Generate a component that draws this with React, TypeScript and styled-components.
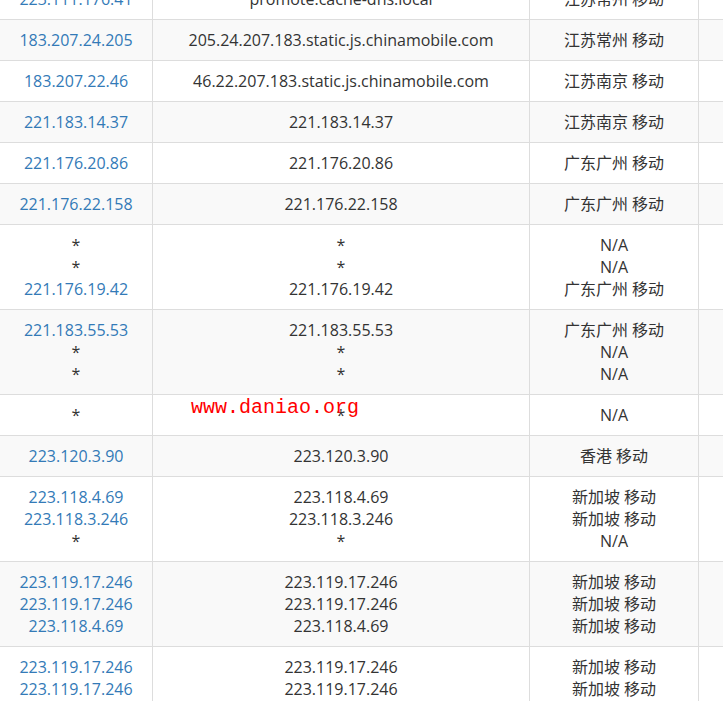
import React from "react";
import styled, { createGlobalStyle } from "styled-components";

const Global = createGlobalStyle`
  html, body { margin: 0; padding: 0; background: #fff; overflow: hidden; }
  body { font-family: "Open Sans", "Noto Sans CJK SC", sans-serif; }
`;

const Page = styled.div`
  position: relative;
  width: 723px;
  height: 701px;
  overflow: hidden;
`;

const Table = styled.table`
  border-collapse: separate;
  border-spacing: 0;
  table-layout: fixed;
  width: 900px;
  margin-top: -21px;
  font-size: 16px;
  line-height: 22px;
  color: #333;
`;

const Row = styled.tr<{ $striped: boolean }>`
  background: ${(p) => (p.$striped ? "#f9f9f9" : "#fff")};
`;

const Cell = styled.td<{ $w: number }>`
  width: ${(p) => p.$w}px;
  box-sizing: border-box;
  padding: 9px 4px;
  text-align: center;
  vertical-align: top;
  border-right: 1px solid #ddd;
  border-bottom: 1px solid #ddd;
  white-space: nowrap;
`;

const IpLine = styled.div<{ $star: boolean }>`
  color: ${(p) => (p.$star ? "#333" : "#337ab7")};
`;

const Line = styled.div``;

const Watermark = styled.div`
  position: absolute;
  left: 191px;
  top: 396px;
  font-family: "Liberation Mono", "DejaVu Sans Mono", monospace;
  font-size: 20px;
  line-height: 24px;
  color: #ff0000;
  pointer-events: none;
`;

type Hop = { ip: string[]; host: string[]; loc: string[] };

const hops: Hop[] = [
  { ip: ["223.111.176.41"], host: ["promote.cache-dns.local"], loc: ["江苏常州 移动"] },
  { ip: ["183.207.24.205"], host: ["205.24.207.183.static.js.chinamobile.com"], loc: ["江苏常州 移动"] },
  { ip: ["183.207.22.46"], host: ["46.22.207.183.static.js.chinamobile.com"], loc: ["江苏南京 移动"] },
  { ip: ["221.183.14.37"], host: ["221.183.14.37"], loc: ["江苏南京 移动"] },
  { ip: ["221.176.20.86"], host: ["221.176.20.86"], loc: ["广东广州 移动"] },
  { ip: ["221.176.22.158"], host: ["221.176.22.158"], loc: ["广东广州 移动"] },
  { ip: ["*", "*", "221.176.19.42"], host: ["*", "*", "221.176.19.42"], loc: ["N/A", "N/A", "广东广州 移动"] },
  { ip: ["221.183.55.53", "*", "*"], host: ["221.183.55.53", "*", "*"], loc: ["广东广州 移动", "N/A", "N/A"] },
  { ip: ["*"], host: ["*"], loc: ["N/A"] },
  { ip: ["223.120.3.90"], host: ["223.120.3.90"], loc: ["香港 移动"] },
  { ip: ["223.118.4.69", "223.118.3.246", "*"], host: ["223.118.4.69", "223.118.3.246", "*"], loc: ["新加坡 移动", "新加坡 移动", "N/A"] },
  { ip: ["223.119.17.246", "223.119.17.246", "223.118.4.69"], host: ["223.119.17.246", "223.119.17.246", "223.118.4.69"], loc: ["新加坡 移动", "新加坡 移动", "新加坡 移动"] },
  { ip: ["223.119.17.246", "223.119.17.246", "223.118.4.69"], host: ["223.119.17.246", "223.119.17.246", "223.118.4.69"], loc: ["新加坡 移动", "新加坡 移动", "新加坡 移动"] },
];

export default function App() {
  return (
    <>
      <Global />
      <Page>
        <Table>
          <tbody>
            {hops.map((h, i) => (
              <Row key={i} $striped={i % 2 === 1}>
                <Cell $w={153}>
                  {h.ip.map((t, j) => (
                    <IpLine key={j} $star={t === "*"}>{t}</IpLine>
                  ))}
                </Cell>
                <Cell $w={377}>
                  {h.host.map((t, j) => (
                    <Line key={j}>{t}</Line>
                  ))}
                </Cell>
                <Cell $w={169}>
                  {h.loc.map((t, j) => (
                    <Line key={j}>{t}</Line>
                  ))}
                </Cell>
                <Cell $w={201} />
              </Row>
            ))}
          </tbody>
        </Table>
        <Watermark>www.daniao.org</Watermark>
      </Page>
    </>
  );
}
